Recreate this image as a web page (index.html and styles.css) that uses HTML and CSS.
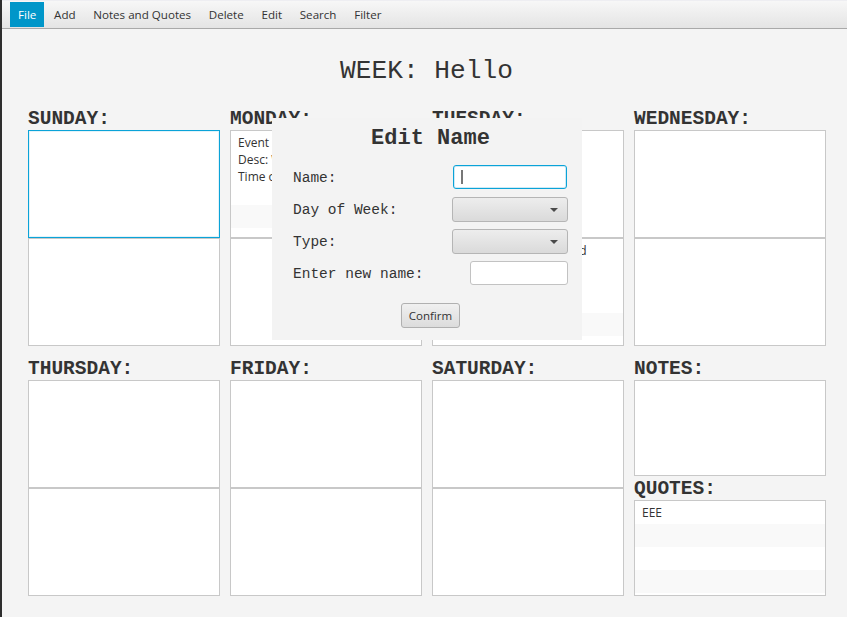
FILE: index.html
```html
<!DOCTYPE html>
<html>
<head>
<meta charset="utf-8">
<link rel="stylesheet" href="styles.css">
</head>
<body>
<div class="window">
  <div class="frame-edge"></div>
  <div class="app">
    <nav class="menubar">
      <span class="menu active">File</span>
      <span class="menu">Add</span>
      <span class="menu">Notes and Quotes</span>
      <span class="menu">Delete</span>
      <span class="menu">Edit</span>
      <span class="menu">Search</span>
      <span class="menu">Filter</span>
    </nav>
    <h1 class="week">WEEK: Hello</h1>
    <div class="grid">
      <section class="day">
        <h2 class="day-label">SUNDAY:</h2>
        <div class="list focused"></div>
        <div class="list"></div>
      </section>
      <section class="day">
        <h2 class="day-label">MONDAY:</h2>
        <div class="list">
          <div class="cell multi">Event Name: Work<br>Desc: Work shift<br>Time of Event: 9:00<br>&nbsp;</div>
          <div class="cell odd"></div>
        </div>
        <div class="list"></div>
      </section>
      <section class="day">
        <h2 class="day-label">TUESDAY:</h2>
        <div class="list"></div>
        <div class="list">
          <div class="cell multi">Event Name: Big Weekend<br>Desc: Play<br>Time: 5:00<br>&nbsp;</div>
          <div class="cell odd"></div>
        </div>
      </section>
      <section class="day">
        <h2 class="day-label">WEDNESDAY:</h2>
        <div class="list"></div>
        <div class="list"></div>
      </section>
      <section class="day">
        <h2 class="day-label">THURSDAY:</h2>
        <div class="list"></div>
        <div class="list"></div>
      </section>
      <section class="day">
        <h2 class="day-label">FRIDAY:</h2>
        <div class="list"></div>
        <div class="list"></div>
      </section>
      <section class="day">
        <h2 class="day-label">SATURDAY:</h2>
        <div class="list"></div>
        <div class="list"></div>
      </section>
      <section class="day">
        <h2 class="day-label">NOTES:</h2>
        <div class="list short"></div>
        <h2 class="day-label">QUOTES:</h2>
        <div class="list short">
          <div class="cell">EEE</div>
          <div class="cell odd"></div>
          <div class="cell"></div>
          <div class="cell odd"></div>
        </div>
      </section>
    </div>
  </div>

  <div class="dialog">
    <h3 class="dialog-title">Edit Name</h3>
    <div class="form">
      <div class="form-row">
        <span class="form-label">Name:</span>
        <div class="field focused-field name-field"><span class="caret"></span></div>
      </div>
      <div class="form-row">
        <span class="form-label">Day of Week:</span>
        <div class="combo"><span class="arrow"></span></div>
      </div>
      <div class="form-row">
        <span class="form-label">Type:</span>
        <div class="combo"><span class="arrow"></span></div>
      </div>
      <div class="form-row">
        <span class="form-label">Enter new name:</span>
        <div class="field new-field"></div>
      </div>
    </div>
    <div class="actions">
      <button class="btn">Confirm</button>
    </div>
  </div>
</div>
</body>
</html>
```

FILE: styles.css
```css
* { box-sizing: border-box; }
html, body { margin: 0; padding: 0; }
body {
  width: 847px;
  height: 617px;
  overflow: hidden;
  background: #f4f4f4;
  font-family: "Open Sans", "Noto Sans", sans-serif;
  color: #333;
}
.window {
  position: relative;
  display: flex;
  width: 847px;
  height: 617px;
}
.frame-edge {
  width: 2px;
  background: #2e2e2e;
  flex: none;
}
.app {
  flex: 1;
  display: flex;
  flex-direction: column;
}
.menubar {
  height: 29px;
  display: flex;
  align-items: stretch;
  padding: 1px 0 1px 8px;
  background: linear-gradient(#f7f7f7, #e4e4e4);
  border-bottom: 1px solid #a9a9a9;
  border-top: 1px solid #eeeef2;
}
.menu {
  display: flex;
  align-items: center;
  padding: 0 8px;
  margin-right: 1.7px;
  font-size: 11.6px;
  color: #333;
}
.menu.active {
  background: #0096c9;
  color: #fff;
  padding: 0 8px;
}
.week {
  margin: 0;
  padding-top: 27px;
  padding-left: 4px;
  height: 77px;
  text-align: center;
  font-family: "Liberation Mono", monospace;
  font-weight: normal;
  font-size: 26.2px;
  line-height: 30px;
  color: #333;
}
.grid {
  display: grid;
  grid-template-columns: repeat(4, 192px);
  column-gap: 10px;
  row-gap: 10px;
  padding-left: 26px;
}
.day {
  display: flex;
  flex-direction: column;
}
.day-label {
  margin: 0;
  height: 24px;
  padding-top: 2px;
  font-family: "Liberation Mono", monospace;
  font-weight: bold;
  font-size: 19.5px;
  line-height: 22px;
  color: #333;
  white-space: nowrap;
}
.list {
  height: 108px;
  border: 1px solid #c8c8c8;
  background: #fff;
  overflow: hidden;
}
.list.short { height: 96px; }
.list.focused {
  border-color: #0aa3d8;
  box-shadow: inset 0 0 0 1px #e3f3f9;
}
.cell {
  height: 23px;
  line-height: 23px;
  padding: 0 7px;
  font-size: 12px;
  color: #333;
  white-space: nowrap;
}
.cell.odd { background: #f9f9f9; }
.cell.multi {
  height: 74px;
  line-height: 17px;
  padding-top: 3px;
}

.dialog {
  position: absolute;
  left: 272px;
  top: 118px;
  width: 310px;
  height: 222px;
  background: #f3f3f3;
  padding: 8px 14px 0 21px;
}
.dialog-title {
  margin: 0 0 9px;
  height: 26px;
  line-height: 26px;
  text-align: center;
  font-family: "Liberation Mono", monospace;
  font-weight: bold;
  font-size: 22px;
  color: #333;
  white-space: nowrap;
}
.form {
  display: flex;
  flex-direction: column;
}
.form-row {
  height: 32px;
  display: flex;
  align-items: center;
  justify-content: space-between;
}
.form-label {
  font-family: "Liberation Mono", monospace;
  font-size: 14.5px;
  color: #333;
  padding-top: 2px;
  white-space: nowrap;
}
.field {
  height: 24px;
  background: #fff;
  border: 1px solid #c2c2c2;
  border-radius: 3px;
  position: relative;
}
.name-field {
  width: 114px;
  margin-right: 1px;
}
.focused-field {
  border-color: #0aa3d8;
  box-shadow: inset 0 0 0 1px #cfeaf5;
}
.caret {
  position: absolute;
  left: 7px;
  top: 4px;
  width: 2px;
  height: 14px;
  background: #777;
}
.new-field { width: 98px; }
.combo {
  position: relative;
  width: 116px;
  height: 25px;
  border: 1px solid #b5b5b5;
  border-radius: 3px;
  background: linear-gradient(#ededed, #dadada);
}
.arrow {
  position: absolute;
  right: 9px;
  top: 10px;
  width: 0;
  height: 0;
  border-left: 4px solid transparent;
  border-right: 4px solid transparent;
  border-top: 4px solid #4a4a4a;
}
.actions {
  display: flex;
  justify-content: center;
  margin-top: 14px;
}
.btn {
  width: 59px;
  height: 25px;
  padding: 0;
  border: 1px solid #b0b0b0;
  border-radius: 3px;
  background: linear-gradient(#f0f0f0, #dcdcdc);
  font-family: "Open Sans", "Noto Sans", sans-serif;
  font-size: 11.5px;
  color: #333;
}
```
